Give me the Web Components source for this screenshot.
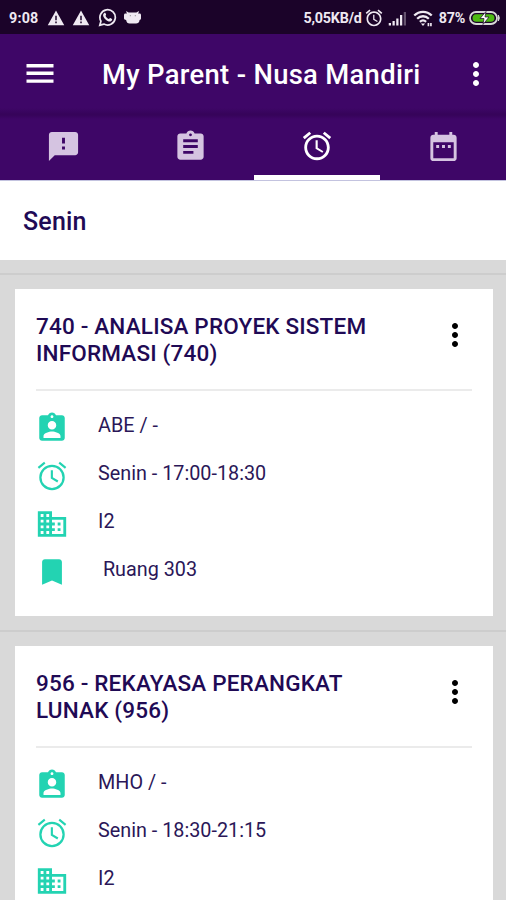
<!DOCTYPE html>
<html lang="id">
<head>
<meta charset="utf-8">
<title>My Parent - Nusa Mandiri</title>
<style>
html,body{margin:0;height:900px;overflow:hidden;background:#d9d9d9;font-family:Roboto,sans-serif}
</style>
</head>
<body>
<parent-app></parent-app>
<script>
const ICONS = {
  menu:'<path d="M3 5.300h18v2.300H3zM3 10.400h18v2.300H3zM3 15.600h18v2.300H3z"/>',
  more:'<path d="M12 8c1.1 0 2-.9 2-2s-.9-2-2-2-2 .9-2 2 .9 2 2 2zm0 2c-1.1 0-2 .9-2 2s.9 2 2 2 2-.9 2-2-.9-2-2-2zm0 6c-1.1 0-2 .9-2 2s.9 2 2 2 2-.9 2-2-.9-2-2-2z"/>',
  feedback:'<path d="M20 2H4c-1.1 0-1.99.9-1.99 2L2 22l4-4h14c1.100 0 2-.9 2-2V4c0-1.100-.9-2-2-2zm-7 12h-2v-2h2v2zm0-4h-2V6h2v4z"/>',
  assignment:'<path d="M19 3h-4.180C14.400 1.840 13.300 1 12 1c-1.300 0-2.400.840-2.820 2H5c-1.100 0-2 .9-2 2v14c0 1.100.9 2 2 2h14c1.100 0 2-.9 2-2V5c0-1.100-.9-2-2-2zm-7 0c.55 0 1 .45 1 1s-.45 1-1 1-1-.45-1-1 .45-1 1-1zm2 14H7v-2h7v2zm3-4H7v-2h10v2zm0-4H7V7h10v2z"/>',
  alarm:'<path d="M22 5.720l-4.600-3.860-1.290 1.530 4.600 3.860L22 5.720zM7.880 3.390L6.600 1.860 2 5.710l1.290 1.530 4.590-3.850zM12.500 8H11v6l4.750 2.850.750-1.230-4-2.370V8zM12 4c-4.970 0-9 4.030-9 9s4.020 9 9 9c4.970 0 9-4.030 9-9s-4.030-9-9-9zm0 16c-3.870 0-7-3.130-7-7s3.130-7 7-7 7 3.130 7 7-3.130 7-7 7z"/>',
  alarmThin:'<path d="M6.900 2.600L2.400 6.300M17.100 2.600l4.500 3.700M11.900 8v5.400l4.200 2.500" fill="none" stroke="currentColor" stroke-width="1.500"/><circle cx="12" cy="13" r="8.200" fill="none" stroke="currentColor" stroke-width="1.600"/>',
  range:'<path d="M9 11H7v2h2v-2zm4 0h-2v2h2v-2zm4 0h-2v2h2v-2zm2-7h-1V2h-2v2H8V2H6v2H5c-1.110 0-1.990.9-1.990 2L3 20c0 1.100.890 2 2 2h14c1.100 0 2-.9 2-2V6c0-1.100-.9-2-2-2zm0 16H5V9h14v11z"/>',
  person:'<path d="M19 3h-4.180C14.400 1.840 13.300 1 12 1c-1.300 0-2.400.840-2.820 2H5c-1.100 0-2 .9-2 2v14c0 1.100.9 2 2 2h14c1.100 0 2-.9 2-2V5c0-1.100-.9-2-2-2zm-7 0c.55 0 1 .45 1 1s-.45 1-1 1-1-.45-1-1 .45-1 1-1zm0 4c1.660 0 3 1.340 3 3s-1.340 3-3 3-3-1.340-3-3 1.340-3 3-3zm6 12H6v-1.400c0-2 4-3.100 6-3.100s6 1.100 6 3.100V19z"/>',
  domain:'<path d="M12 7V3H2v18h20V7H12zM6 19H4v-2h2v2zm0-4H4v-2h2v2zm0-4H4V9h2v2zm0-4H4V5h2v2zm4 12H8v-2h2v2zm0-4H8v-2h2v2zm0-4H8V9h2v2zm0-4H8V5h2v2zm10 12h-8v-2h2v-2h-2v-2h2v-2h-2V9h8v10zm-2-8h-2v2h2v-2zm0 4h-2v2h2v-2z"/>',
  bookmark:'<path d="M17 3H7c-1.100 0-1.990.9-1.990 2L5 21l7-3 7 3V5c0-1.100-.9-2-2-2z"/>',
  warn:'<path d="M12 2L1 21.500h22L12 2zM13 19h-2v-2.200h2V19zm0-4h-2V9h2v6z"/>',
  whatsapp:'<path d="M2.300 21.700l1.400-5.100A9.700 9.700 0 1 1 7.400 20.300z" fill="none" stroke="currentColor" stroke-width="2.200"/><path d="M7.600 6.500c1.200-1 2-.3 2.600 1.700.2.800-.9 1.300-.6 1.900.9 1.700 2.100 2.900 3.900 3.700.700.300 1.300-1.400 2-1.100l2.200 1.100c.7.400-.3 2.800-2 3.200-3.300.8-9.700-4.700-9.300-8.200.1-.9.500-1.700 1.200-2.300z"/>',
  android:'<path d="M3.500 3l3 2h11l3-2 .8.600-1.500 2.900H22q2 0 2 2v5q0 2-2 2c-.4 3.800-2.400 5-5 5H8c-2.800 0-4.500-1.600-5-5q-3 0-3-2v-5q0-2 2-2h2.200L2.900 3.600z"/><circle cx="9" cy="9.500" r=".9" fill="#999"/><circle cx="16" cy="9.500" r=".9" fill="#999"/>',
  signal:'<path d="M1 18.500h3V22H1zM6 16h3v6H6zM11 12.500h3V22h-3zM16 8h3v14h-3z"/><path d="M21 4h3v18h-3z" opacity=".35"/>',
  wifi:'<g fill="none" stroke="currentColor" stroke-width="2.700"><path d="M1.500 9c6-6 15-6 21 0"/><path d="M5 12.900c4-4 10-4 14 0"/><path d="M8.300 16.700c2.200-2.200 5.200-2.200 7.400 0"/></g><path d="M9.500 18.500h5L12 21.500zM17.500 18h2v4h-2zM20.500 18h2v4h-2z"/>'
};

class MdIcon extends HTMLElement {
  connectedCallback(){
    const s = this.getAttribute('size') || 34;
    this.attachShadow({mode:'open'}).innerHTML =
      `<style>:host{display:block;flex:none;width:${s}px;height:${s}px}svg{display:block}</style>
       <svg width="${s}" height="${s}" viewBox="0 0 24 24" fill="currentColor">${ICONS[this.getAttribute('name')]}</svg>`;
  }
}
customElements.define('md-icon', MdIcon);

class StatusBar extends HTMLElement {
  connectedCallback(){
    this.attachShadow({mode:'open'}).innerHTML = `
<style>
:host{display:flex;align-items:center;height:34px;box-sizing:border-box;padding:1px 6px 0 9px;background:#1b0329;color:#efe9f2;font-size:14.300px;font-weight:700}
.time{width:30px;letter-spacing:.2px}
.left,.right{display:flex;align-items:center}
.left{gap:7.500px}
.right{margin-left:auto}
.rate{letter-spacing:-.2px;margin-right:2px}
.sig{margin-left:4px}.wifi{margin-left:7px}
.pct{margin:0 4px 0 6px;letter-spacing:-.2px}
svg{display:block}
</style>
<div class="left"><span class="time">9:08</span>
<md-icon name="warn" size="18"></md-icon><md-icon name="warn" size="18"></md-icon>
<md-icon name="whatsapp" size="19"></md-icon><md-icon name="android" size="17"></md-icon></div>
<div class="right"><span class="rate">5,05KB/d</span><md-icon name="alarm" size="20"></md-icon>
<md-icon class="sig" name="signal" size="18"></md-icon><md-icon class="wifi" name="wifi" size="20"></md-icon>
<span class="pct">87%</span>
<svg width="31" height="16" viewBox="0 0 31 16"><rect x="1" y="2" width="27" height="12" rx="6" fill="#1b0329" stroke="#d8d8d8" stroke-width="1.800"/><path d="M29.400 5q1.800 3 0 6z" fill="#d8d8d8" stroke="#d8d8d8"/><rect x="3.500" y="4.200" width="22" height="7.600" rx="3.800" fill="#4dbb12"/><path d="M17 1.500l-6 7h4l-1 6 6-7.500h-4z" fill="#fff" stroke="#1b0329" stroke-width=".7"/></svg></div>`;
  }
}
customElements.define('status-bar', StatusBar);

class AppBar extends HTMLElement {
  connectedCallback(){
    this.attachShadow({mode:'open'}).innerHTML = `
<style>
:host{display:flex;align-items:center;height:81px;box-sizing:border-box;padding:0 12px 1px 22px;color:#fff;
background:linear-gradient(#3e0667 0,#3e0667 74px,#36045a 80px)}
h1{margin:0 0 0 44px;font-size:27.400px;font-weight:500;line-height:36px;letter-spacing:.31px;white-space:nowrap;padding-top:2px}
.more{margin-left:auto}
</style>
<md-icon name="menu" size="36"></md-icon><h1><slot></slot></h1><md-icon class="more" name="more" size="36"></md-icon>`;
  }
}
customElements.define('app-bar', AppBar);

class TabBar extends HTMLElement {
  connectedCallback(){
    this.attachShadow({mode:'open'}).innerHTML = `
<style>
:host{display:grid;grid-template-columns:127px 127px 126px 126px;height:66px;background:linear-gradient(#36045a,#3e0667 4px);border-bottom:1px solid #c3c3df;box-sizing:border-box}
div{display:flex;justify-content:center;padding-top:14px;color:#d5c4e1;border-bottom:5px solid transparent}
.on{color:#fff;border-color:#fff}
</style>
<div><md-icon name="feedback" size="35"></md-icon></div>
<div><md-icon name="assignment" size="35"></md-icon></div>
<div class="on"><md-icon name="alarm" size="34"></md-icon></div>
<div><md-icon name="range" size="35"></md-icon></div>`;
  }
}
customElements.define('tab-bar', TabBar);

class DayHeading extends HTMLElement {
  connectedCallback(){
    this.attachShadow({mode:'open'}).innerHTML = `
<style>
:host{display:flex;align-items:center;height:79px;box-sizing:border-box;background:#fff;padding:1px 23px 0;color:#1f0a55;font-size:25px;font-weight:500;letter-spacing:.2px}
</style><slot></slot>`;
  }
}
customElements.define('day-heading', DayHeading);

class InfoRow extends HTMLElement {
  connectedCallback(){
    this.attachShadow({mode:'open'}).innerHTML = `
<style>
:host{display:flex;align-items:center;height:48px;color:#2b1758;font-size:19.800px}
md-icon{color:#23d3b2;margin-right:29px}
span{padding-bottom:5px;white-space:pre}
</style><md-icon name="${this.getAttribute('icon')}" size="34"></md-icon><span><slot></slot></span>`;
  }
}
customElements.define('info-row', InfoRow);

class ScheduleCard extends HTMLElement {
  connectedCallback(){
    this.attachShadow({mode:'open'}).innerHTML = `
<style>
:host{display:block;height:357px;box-sizing:border-box;padding:14px 13px 0 15px;border-top:2px solid #cdcdcd}
article{height:327px;background:#fff;box-sizing:border-box;padding:0 21px}
header{display:flex;height:102px;box-sizing:border-box;border-bottom:2px solid #ebebeb;padding-top:24px}
h2{margin:0;width:370px;font-size:22.500px;line-height:26.700px;font-weight:500;color:#1f0a55;letter-spacing:.18px;white-space:nowrap}
md-icon{color:#000;margin:4px -1px 0 auto}
.rows{padding-top:13px;margin-left:-1px}
</style>
<article><header><h2><slot name="title"></slot></h2><md-icon name="more" size="36"></md-icon></header>
<div class="rows"><slot></slot></div></article>`;
  }
}
customElements.define('schedule-card', ScheduleCard);

class ParentApp extends HTMLElement {
  connectedCallback(){
    this.attachShadow({mode:'open'}).innerHTML = `
<style>
:host{display:block;width:506px;height:900px;overflow:hidden;background:#d9d9d9}
main{padding-top:13px}
</style>
<status-bar></status-bar>
<app-bar>My Parent - Nusa Mandiri</app-bar>
<tab-bar></tab-bar>
<day-heading>Senin</day-heading>
<main>
<schedule-card><span slot="title">740 - ANALISA PROYEK SISTEM<br>INFORMASI (740)</span>
<info-row icon="person">ABE / -</info-row>
<info-row icon="alarmThin">Senin - 17:00-18:30</info-row>
<info-row icon="domain">I2</info-row>
<info-row icon="bookmark"> Ruang 303</info-row></schedule-card>
<schedule-card><span slot="title">956 - REKAYASA PERANGKAT<br>LUNAK (956)</span>
<info-row icon="person">MHO / -</info-row>
<info-row icon="alarmThin">Senin - 18:30-21:15</info-row>
<info-row icon="domain">I2</info-row></schedule-card>
</main>`;
  }
}
customElements.define('parent-app', ParentApp);
</script>
</body>
</html>
